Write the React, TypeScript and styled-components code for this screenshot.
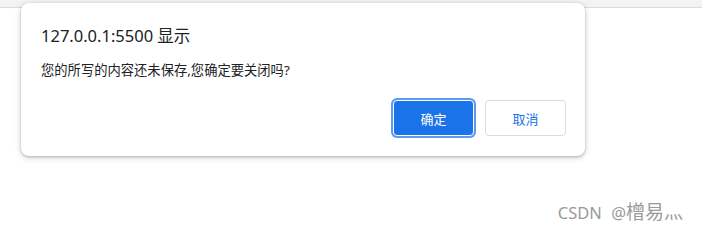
import styled, { createGlobalStyle } from 'styled-components';

const GlobalStyle = createGlobalStyle`
    html, body {
        margin: 0;
        padding: 0;
        background: #ffffff;
    }
    body {
        font-family: "Noto Sans", "Noto Sans CJK SC", sans-serif;
        width: 702px;
        height: 231px;
        overflow: hidden;
    }
`;

const Page = styled.div`
    position: relative;
    width: 702px;
    height: 231px;
    display: flex;
    flex-direction: column;
`;

const TopBar = styled.div`
    height: 7px;
    background: #f1f3f4;
    border-bottom: 1px solid #dadce0;
`;

const Dialog = styled.div`
    position: absolute;
    left: 21px;
    top: 3px;
    width: 564px;
    height: 153px;
    box-sizing: border-box;
    background: #ffffff;
    border-radius: 8px;
    box-shadow: 0 1px 3px rgba(60, 64, 67, 0.35), 0 2px 6px 1px rgba(60, 64, 67, 0.12);
    padding: 21px 19px 20px 20px;
    display: flex;
    flex-direction: column;
`;

const Title = styled.div`
    font-size: 16.5px;
    line-height: 24px;
    color: #202124;
`;

const Message = styled.div`
    margin-top: 13px;
    font-size: 13.3px;
    line-height: 18px;
    color: #202124;
`;

const Actions = styled.div`
    margin-top: auto;
    display: flex;
    justify-content: flex-end;
    gap: 11px;
`;

const Button = styled.button<{ $primary?: boolean }>`
    width: 81px;
    height: 36px;
    box-sizing: border-box;
    border-radius: 4px;
    font-family: "Noto Sans CJK SC", sans-serif;
    font-size: 13px;
    cursor: pointer;
    background: ${p => (p.$primary ? '#1a73e8' : '#ffffff')};
    color: ${p => (p.$primary ? '#ffffff' : '#1a73e8')};
    border: 1px solid ${p => (p.$primary ? '#ffffff' : '#dadce0')};
    box-shadow: ${p => (p.$primary ? '0 0 0 2px #5e9bf0' : 'none')};
`;

const Watermark = styled.div`
    position: absolute;
    right: 19px;
    bottom: 7px;
    font-size: 16.5px;
    line-height: 22px;
    word-spacing: 5px;
    color: #9a9a9a;
    font-family: "Noto Sans", "Noto Sans CJK SC", sans-serif;
`;

const Name = styled.span`
    font-size: 19px;
    font-family: "Noto Sans CJK SC", sans-serif;
`;

export default function App() {
    return (
        <Page>
            <GlobalStyle />
            <TopBar />
            <Dialog>
                <Title>127.0.0.1:5500 显示</Title>
                <Message>您的所写的内容还未保存,您确定要关闭吗?</Message>
                <Actions>
                    <Button $primary>确定</Button>
                    <Button>取消</Button>
                </Actions>
            </Dialog>
            <Watermark>CSDN @<Name>橧易灬</Name></Watermark>
        </Page>
    );
}
